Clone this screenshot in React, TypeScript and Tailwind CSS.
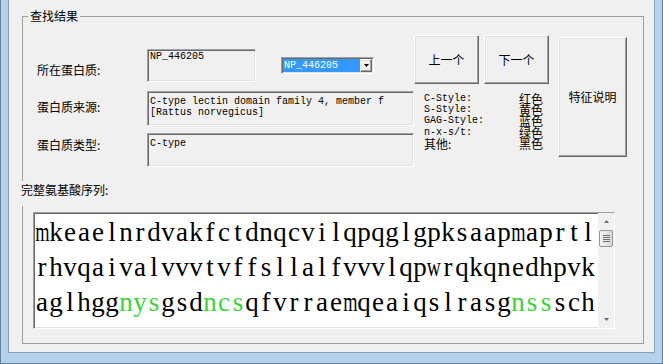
const cjk = "font-['Noto_Sans_CJK_SC',sans-serif]";
const mono = "font-['Liberation_Mono','Noto_Sans_CJK_SC',monospace]";
const serif = "font-['Liberation_Serif',serif]";
const sunken =
  "border border-t-[#a0a0a0] border-l-[#a0a0a0] border-r-white border-b-white shadow-[inset_1px_1px_0_#696969,inset_-1px_-1px_0_#e3e3e3]";
const raised =
  "border border-t-white border-l-white border-r-[#696969] border-b-[#696969] shadow-[inset_-1px_-1px_0_#a0a0a0,inset_1px_1px_0_#e3e3e3]";

type Run = [string, boolean];

const sequence: Run[][] = [
  [["mkeaelnrdvakfctdnqcvilqpqglgpksaapmaprtl", false]],
  [["rhvqaivalvvvtvffsllalfvvvlqpwrqkqnedhpvk", false]],
  [
    ["aglhgg", false],
    ["nys", true],
    ["gsd", false],
    ["ncs", true],
    ["qfvrraemqeaiqslrasg", false],
    ["nss", true],
    ["sch", false],
  ],
  [["tdlkhqltfllhdstlkwelkhlsdgkqhltvlgeprytf", false]],
];

const legend: [string, string][] = [
  ["C-Style:", "红色"],
  ["S-Style:", "黄色"],
  ["GAG-Style:", "蓝色"],
  ["n-x-s/t:", "绿色"],
  ["其他:", "黑色"],
];

function Arrow({ up, color }: { up?: boolean; color: string }) {
  return (
    <svg width="5" height="3" viewBox="0 0 5 3">
      <path d={up ? "M0 3H5L2.5 0Z" : "M0 0H5L2.5 3Z"} fill={color} />
    </svg>
  );
}

function Label({ text, pt }: { text: string; pt: string }) {
  return <div className={`w-[124px] shrink-0 pl-[14px] text-[12px] leading-[14px] ${pt}`}>{text}</div>;
}

// fixed 14px cells so the serif face reads like the fixed-pitch original
function Residue({ c }: { c: string }) {
  const wide = c === "m" ? "scale-x-[0.68]" : c === "w" ? "scale-x-[0.72]" : "";
  return (
    <span className="inline-flex w-[14px] justify-center">
      <span className={`inline-block ${wide}`}>{c}</span>
    </span>
  );
}

function Scrollbar() {
  return (
    <div className="flex w-[16px] shrink-0 flex-col bg-[#f1f1f1]">
      <div className="flex h-[17px] items-center justify-center">
        <Arrow up color="#6b6b6b" />
      </div>
      <div className="mx-[1px] flex h-[17px] flex-col items-center justify-center gap-[1px] rounded-[2px] border border-[#989898] bg-linear-to-r from-[#f4f4f4] to-[#d9d9d9]">
        {[0, 1, 2, 3].map((i) => (
          <div key={i} className="h-[1px] w-[7px] bg-[#707070]" />
        ))}
      </div>
      <div className="flex-1" />
      <div className="flex h-[17px] items-center justify-center">
        <Arrow color="#6b6b6b" />
      </div>
    </div>
  );
}

export default function App() {
  return (
    <div className={`flex h-[364px] w-[663px] border-x border-b border-[#62809e] bg-[#b6d1eb] px-[7px] pb-[10px] text-black ${cjk}`}>
      <div className="flex flex-1 flex-col border-x border-b border-[#8c9fb4] bg-[#f0f0f0] pt-[9px] pr-[10px] pb-[8px] pl-[13px]">
        <fieldset className="m-0 flex min-w-0 flex-1 flex-col border border-[#a0a0a0] p-0">
          <legend className="ml-[5px] px-[2px] text-[12px] leading-[14px]">查找结果</legend>

          <div className="mt-[12px] flex items-start">
            {/* fields */}
            <div className="flex w-[391px] shrink-0 flex-col pt-[14px]">
              <div className="flex h-[33px] items-start">
                <Label text="所在蛋白质:" pt="pt-[14px]" />
                <div className={`h-[33px] w-[109px] shrink-0 bg-[#f0f0f0] pt-[1px] pl-[2px] text-[10px] leading-[11px] ${sunken} ${mono}`}>
                  NP_446205
                </div>
                <div className={`mt-[8px] ml-[25px] flex h-[17px] w-[93px] shrink-0 bg-white p-[1px] ${sunken}`}>
                  <div className={`flex-1 bg-[#3399ff] pl-[1px] text-[10px] leading-[13px] text-white ${mono}`}>NP_446205</div>
                  <div className={`flex w-[12px] items-center justify-center bg-[#f0f0f0] ${raised}`}>
                    <Arrow color="#000" />
                  </div>
                </div>
              </div>

              <div className="mt-[9px] flex items-start">
                <Label text="蛋白质来源:" pt="pt-[9px]" />
                <div className={`h-[35px] w-[267px] shrink-0 bg-[#f0f0f0] pt-[4px] pl-[2px] text-[10px] leading-[11px] whitespace-pre ${sunken} ${mono}`}>
                  {"C-type lectin domain family 4, member f\n[Rattus norvegicus]"}
                </div>
              </div>

              <div className="mt-[7px] flex items-start">
                <Label text="蛋白质类型:" pt="pt-[5px]" />
                <div className={`h-[34px] w-[267px] shrink-0 bg-[#f0f0f0] pt-[4px] pl-[2px] text-[10px] leading-[11px] ${sunken} ${mono}`}>
                  C-type
                </div>
              </div>
            </div>

            {/* nav + colour legend */}
            <div className="flex w-[135px] shrink-0 flex-col">
              <div className="flex gap-[5px]">
                <button className={`h-[49px] w-[65px] bg-[#f0f0f0] text-[12px] ${raised}`}>上一个</button>
                <button className={`h-[49px] w-[65px] bg-[#f0f0f0] text-[12px] ${raised}`}>下一个</button>
              </div>
              <div className="mt-[8.5px] flex flex-col pl-[10px]">
                {legend.map(([name, colour]) => (
                  <div key={name} className="flex h-[11.4px]">
                    <div
                      className={`w-[95px] shrink-0 leading-[11.4px] ${
                        name === "其他:" ? "text-[12px]" : `text-[10px] ${mono}`
                      }`}
                    >
                      {name}
                    </div>
                    <div className="text-[12px] leading-[11.4px]">{colour}</div>
                  </div>
                ))}
              </div>
            </div>

            <button className={`mt-[2px] ml-[9px] h-[120px] w-[69px] shrink-0 bg-[#f0f0f0] text-[12px] ${raised}`}>
              特征说明
            </button>
          </div>

          <div className="relative mt-[14px] -ml-[2px] h-[25px] self-start bg-[#f0f0f0] pt-[2px] pr-[2px] text-[12px] leading-[14px]">
            完整氨基酸序列:
          </div>

          <div className={`mt-[6px] ml-[10px] flex h-[117px] w-[582px] overflow-hidden bg-white ${sunken}`}>
            <div className={`flex-1 overflow-hidden pt-[2px] pl-[1px] text-[27px] leading-[35px] whitespace-pre ${serif}`}>
              {sequence.map((line, i) => (
                <div key={i} className={i === 3 ? "mt-[5px] h-[35px]" : "h-[35px]"}>
                  {line.map(([s, hit], j) => (
                    <span key={j} className={hit ? "text-[#3ad43a]" : ""}>
                      {s.split("").map((c, k) => (
                        <Residue key={k} c={c} />
                      ))}
                    </span>
                  ))}
                </div>
              ))}
            </div>
            <Scrollbar />
          </div>
        </fieldset>
      </div>
    </div>
  );
}
